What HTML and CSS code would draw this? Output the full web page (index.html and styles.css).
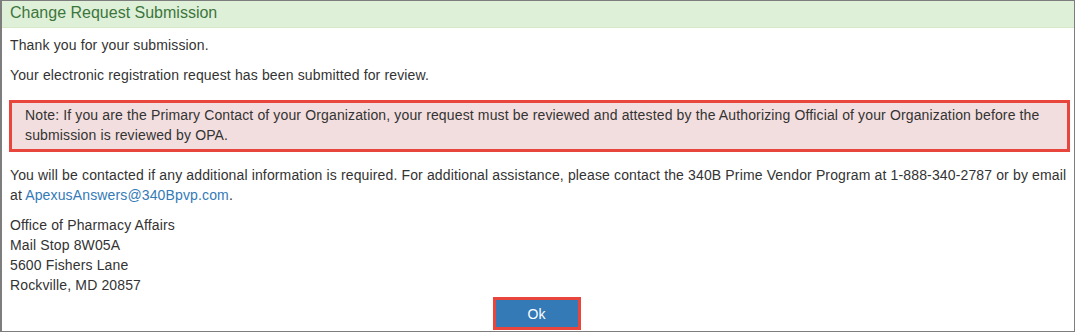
FILE: index.html
```html
<!DOCTYPE html>
<html>
<head>
<meta charset="utf-8">
<link rel="stylesheet" href="styles.css">
</head>
<body>
<div class="panel">
  <div class="panel-heading">Change Request Submission</div>
  <div class="panel-body">
    <p>Thank you for your submission.</p>
    <p>Your electronic registration request has been submitted for review.</p>
    <div class="note">Note: If you are the Primary Contact of your Organization, your request must be reviewed and attested by the Authorizing Official of your Organization before the submission is reviewed by OPA.</div>
    <p>You will be contacted if any additional information is required. For additional assistance, please contact the 340B Prime Vendor Program at 1-888-340-2787 or by email at <a class="link" href="#">ApexusAnswers@340Bpvp.com</a>.</p>
    <div class="address">
      <div>Office of Pharmacy Affairs</div>
      <div>Mail Stop 8W05A</div>
      <div>5600 Fishers Lane</div>
      <div>Rockville, MD 20857</div>
    </div>
    <div class="actions">
      <button class="btn-ok" type="button">Ok</button>
    </div>
  </div>
</div>
</body>
</html>
```

FILE: styles.css
```css
html, body {
  margin: 0;
  padding: 0;
  background: #fff;
}
.panel {
  box-sizing: border-box;
  width: 1075px;
  height: 332px;
  border: 1px solid #7d7d7d;
  border-left-width: 2px;
  overflow: hidden;
  font-family: "Liberation Sans", Arial, sans-serif;
  font-size: 14px;
  line-height: 20px;
  color: #333;
}
.panel-heading {
  background: #dff0d8;
  color: #3c763d;
  font-size: 16px;
  line-height: 20px;
  padding: 2px 8px 4px;
  border-bottom: 1px solid #d6e9c6;
}
.panel-body {
  padding: 7px 7px 0 8px;
  letter-spacing: 0.14px;
}
.panel-body p {
  margin: 0 0 10px;
}
.note {
  margin: 15px -3px 13px -1px;
  border: 3px solid #e8463d;
  background: #f2dede;
  padding: 2px 13px 4px 13px;
}
.link {
  color: #337ab7;
  text-decoration: none;
}
.address {
  margin: 0;
}
.actions {
  display: flex;
  justify-content: center;
  margin-top: 2px;
  padding-right: 4px;
}
.btn-ok {
  box-sizing: border-box;
  width: 88px;
  height: 33px;
  border: 3px solid #e8463d;
  background: #337ab7;
  color: #fff;
  font-family: "Liberation Sans", Arial, sans-serif;
  font-size: 14px;
  letter-spacing: 0;
  padding: 0;
  margin: 0;
}
```
